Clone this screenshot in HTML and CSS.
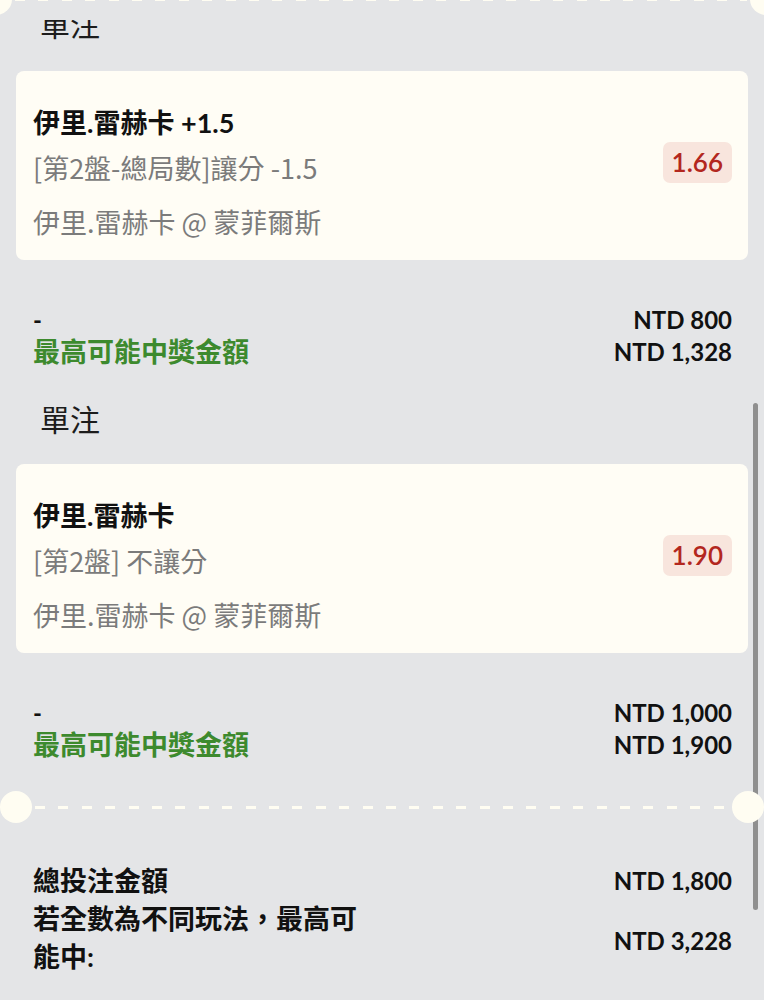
FILE: index.html
```html
<!DOCTYPE html>
<html>
<head>
  <meta charset="UTF-8">
  <title>投注單</title>
  <link rel="stylesheet" href="styles.css">
</head>
<body>

  <div class="cut cut-top"><span class="hole"></span><span class="dashes"></span><span class="hole"></span></div>

  <div class="bets">
    <h2 class="type first">單注</h2>
    <div class="card">
      <div class="info">
        <div class="pick">伊里.雷赫卡 +1.5</div>
        <div class="market">[第2盤-總局數]讓分 -1.5</div>
        <div class="match">伊里.雷赫卡 @ 蒙菲爾斯</div>
      </div>
      <span class="odds">1.66</span>
    </div>
    <div class="sum">
      <span>-</span><span class="amt">NTD 800</span>
      <span class="win">最高可能中獎金額</span><span class="amt">NTD 1,328</span>
    </div>

    <h2 class="type">單注</h2>
    <div class="card">
      <div class="info">
        <div class="pick">伊里.雷赫卡</div>
        <div class="market">[第2盤] 不讓分</div>
        <div class="match">伊里.雷赫卡 @ 蒙菲爾斯</div>
      </div>
      <span class="odds">1.90</span>
    </div>
    <div class="sum">
      <span>-</span><span class="amt">NTD 1,000</span>
      <span class="win">最高可能中獎金額</span><span class="amt">NTD 1,900</span>
    </div>
  </div>

  <div class="cut"><span class="hole"></span><span class="dashes"></span><span class="hole"></span></div>

  <div class="totals">
    <span class="label">總投注金額</span><span class="amt">NTD 1,800</span>
    <span class="label">若全數為不同玩法，最高可能中:</span><span class="amt low">NTD 3,228</span>
  </div>

  <div class="scrollbar"></div>

</body>
</html>
```

FILE: styles.css
```css
html { height: 100%; }
body { margin: 0; height: 1000px; overflow: hidden; position: relative; background: #e4e5e7; color: #111; font-family: Lato, "Noto Sans CJK TC", sans-serif; }

/* ticket cut line with half holes */
.cut { display: flex; align-items: center; height: 32px; margin-top: 30px; }
.cut .hole { width: 32px; height: 32px; flex: none; border-radius: 50%; background: #fffdf2; position: relative; z-index: 1; }
.cut .dashes { flex: 1; height: 3px; margin: 0 3px; background: repeating-linear-gradient(90deg, #fffdf2 0 10px, transparent 10px 23.4px); }
.cut-top { margin: -17px -18px 0 -20px; }

.bets { overflow: hidden; margin-top: 5px; }
.type { margin: 30px 0 0; padding-left: 40px; font-family: "Noto Sans CJK TC", sans-serif; font-size: 30px; line-height: 40px; font-weight: 400; color: #1c1c1c; }
.type.first { margin-top: -17px; }

.card { display: flex; align-items: center; margin: 26px 16px 0; padding: 34px 16px 20px 17px; background: #fffdf5; border-radius: 8px; }
.type.first + .card { margin-top: 28px; }
.info { flex: 1; font-size: 27px; line-height: 36px; }
.pick { font-weight: 700; }
.market, .match { font-family: "Noto Sans CJK TC", sans-serif; color: #7b7b7b; }
.market { margin-top: 9px; }
.match { margin-top: 18px; }
.odds { margin-bottom: 20px; padding: 0 9px; line-height: 41px; font-size: 26px; font-weight: 600; color: #b3271e; background: #f8e5dd; border-radius: 7px; }

.sum { display: grid; grid-template-columns: 1fr auto; margin-top: 44px; padding: 0 32px 0 33px; font-weight: 700; font-size: 24px; line-height: 32px; }
.sum .win { font-size: 27px; color: #3d8a2e; }
.amt { text-align: right; font-size: 24px; font-weight: 700; }

.totals { display: grid; grid-template-columns: 1fr auto; align-items: center; margin-top: 39px; padding: 0 32px 0 33px; font-weight: 700; line-height: 38px; }
.totals .label { max-width: 330px; font-size: 27px; }
.totals .low { padding-top: 5px; }

.scrollbar { position: absolute; left: 753px; top: 403px; width: 5px; height: 507px; border-radius: 3px; background: #8f8f8f; }
```
